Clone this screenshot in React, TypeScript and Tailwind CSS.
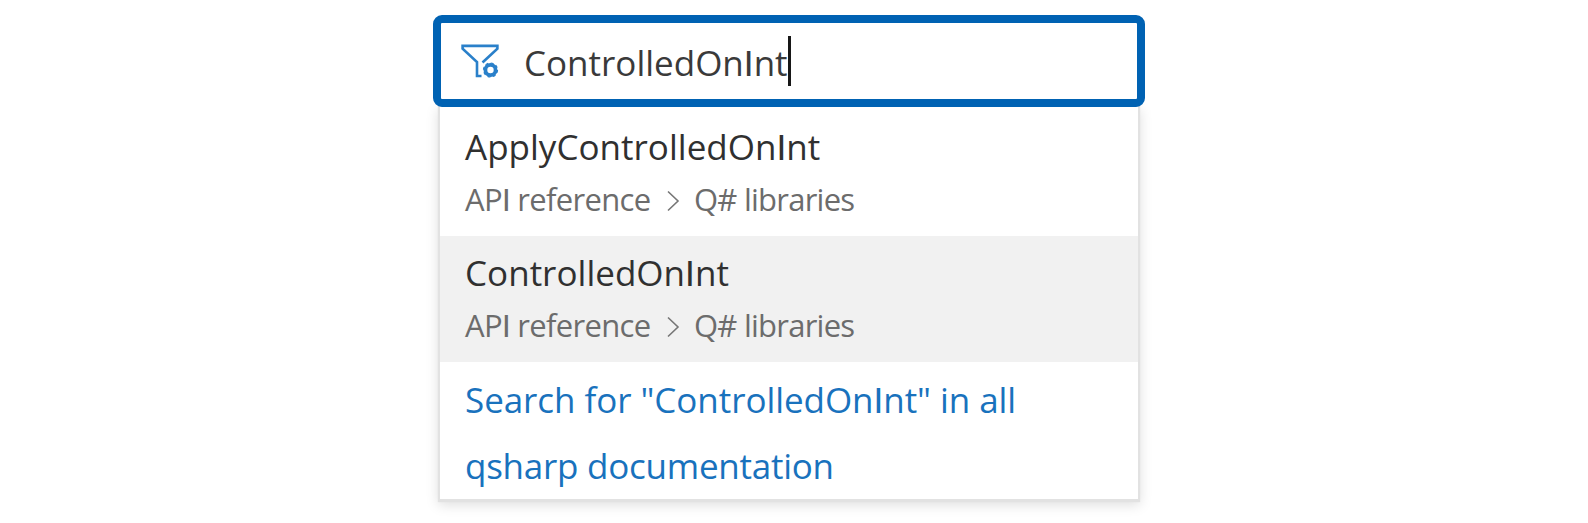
const FilterIcon = () => (
  <svg width="40" height="38" viewBox="0 0 40 38" fill="none" stroke="#2a80ca" className="mt-[3px] shrink-0">
    <path d="M21.5 18.5L36.4 4.6V1.9H1.6V4.6L16 18V32H20.5" strokeWidth="2.6" />
    <circle cx="29.5" cy="26" r="5.1" strokeWidth="3.8" />
    <circle cx="29.5" cy="26" r="7" strokeWidth="1.2" strokeDasharray="2.9 2.6" />
  </svg>
);

const Chevron = () => (
  <svg width="14" height="22" viewBox="0 0 14 22" fill="none" stroke="#767676" strokeWidth="1.6" className="mt-[4px] shrink-0">
    <path d="M2 1.5L12 11L2 20.5" />
  </svg>
);

// Sets the capital I in a face without slab serifs.
function PlainI({ text }: { text: string }) {
  return text.split(/(I)/).map((part, i) =>
    part === "I" ? <span key={i} className="font-[Lato,sans-serif] leading-none">I</span> : part
  );
}

function Result({ title, selected }: { title: string; selected?: boolean }) {
  return (
    <li className={`h-[126px] pl-[25px] ${selected ? "bg-[#f1f1f1]" : "bg-white"}`}>
      <div className="h-[67px] pt-[13px] text-[35px] leading-[48px] text-[#303030]">
        <span className="inline-block whitespace-nowrap tracking-[0.02px]"><PlainI text={title} /></span>
      </div>
      <div className="flex h-[44px] items-center text-[31px] leading-[44px] text-[#6c6c6c]">
        <span className="w-[201px] whitespace-nowrap tracking-[-0.68px]"><PlainI text="API reference" /></span>
        <Chevron />
        <span className="ml-[14px] whitespace-nowrap tracking-[-0.75px]">Q# libraries</span>
      </div>
    </li>
  );
}

export default function App() {
  return (
    <div className="flex h-[523px] w-[1588px] flex-col bg-white pl-[433px] pt-[15px] font-['Open_Sans','Noto_Sans',sans-serif]">
      <div className="relative z-10 flex h-[92px] w-[712px] items-center rounded-[9px] border-8 border-[#0062b3] bg-white pl-[20px]">
        <FilterIcon />
        <div className="ml-[23px] flex items-center">
          <span className="mt-[4px] whitespace-nowrap text-[35px] leading-[48px] text-[#3a3a3a]"><PlainI text="ControlledOnInt" /></span>
          <span className="h-[50px] w-[3px] bg-[#171717]" />
        </div>
      </div>
      <div className="ml-[7px] h-[392px] w-[698px] bg-white pt-[3px] shadow-[0_1px_1px_2px_#e2e2e2,0_4px_12px_2px_rgba(0,0,0,0.13)]">
        <ul>
          <Result title="ApplyControlledOnInt" />
          <Result title="ControlledOnInt" selected />
        </ul>
        <a className="block pl-[25px] pt-[5px] text-[35px] leading-[66px] text-[#1972bd]">
          <span className="block whitespace-nowrap tracking-[-0.06px]"><PlainI text={'Search for "ControlledOnInt" in all'} /></span>
          <span className="block whitespace-nowrap tracking-[-0.25px]">qsharp documentation</span>
        </a>
      </div>
    </div>
  );
}
